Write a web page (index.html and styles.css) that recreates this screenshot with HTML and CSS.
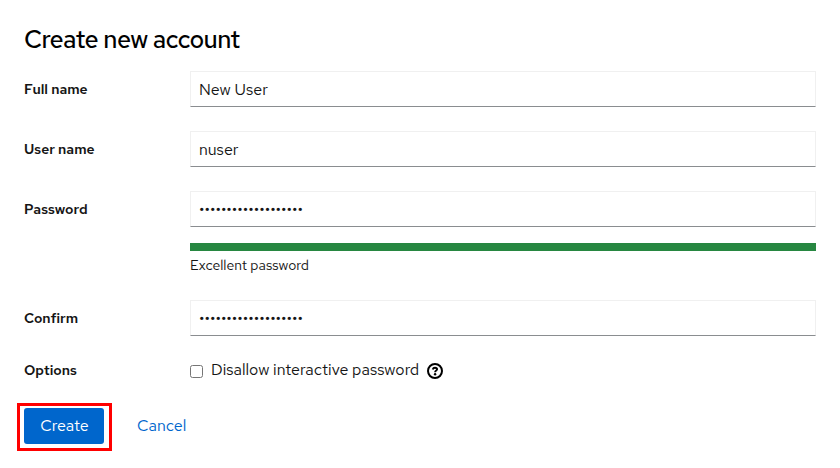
FILE: index.html
```
<!DOCTYPE html>
<html lang="en">
<head>
<meta charset="utf-8">
<title>Create new account</title>
<link rel="stylesheet" href="styles.css">
</head>
<body>
<main class="dialog">
  <h1 class="title">Create new account</h1>
  <form class="form">
    <label class="label" for="full-name">Full name</label>
    <input class="input" id="full-name" type="text" value="New User">
    <label class="label" for="user-name">User name</label>
    <input class="input" id="user-name" type="text" value="nuser">
    <label class="label" for="password">Password</label>
    <div class="field">
      <input class="input" id="password" type="password" value="correcthorsebattery">
      <div class="meter"></div>
      <div class="helper">Excellent password</div>
    </div>
    <label class="label" for="confirm">Confirm</label>
    <input class="input" id="confirm" type="password" value="correcthorsebattery">
    <span class="label label-options">Options</span>
    <div class="options">
      <input class="check" id="disallow" type="checkbox">
      <label class="check-label" for="disallow">Disallow interactive password</label>
      <svg class="help" viewBox="0 0 16 16" width="16" height="16" fill="none" stroke="#000">
        <circle cx="8" cy="8" r="7" stroke-width="2"/>
        <path d="M5.7 6.5C6.100 5.100 7 4.700 8 4.700c1.200 0 2.100.6 2.100 1.600C10.100 7.600 8.100 7.500 8.100 9.200" stroke-width="1.900"/>
        <circle cx="8.100" cy="11.200" r="1.200" fill="#000" stroke="none"/>
      </svg>
    </div>
  </form>
  <div class="actions">
    <div class="highlight"><button class="button primary" type="button">Create</button></div>
    <button class="button link" type="button">Cancel</button>
  </div>
</main>
</body>
</html>
```
FILE: styles.css
```
* {
  box-sizing: border-box;
}

body {
  margin: 0;
  background: #fff;
  color: #151515;
  font-family: "Red Hat Text", Lato, "Open Sans", sans-serif;
  font-size: 16px;
  line-height: 24px;
}

.dialog {
  padding: 24px 24px 0;
}

.title {
  margin: 0 0 15px;
  color: #000;
  font-size: 25px;
  font-weight: 500;
  letter-spacing: -0.6px;
  line-height: 32px;
}

.form {
  display: grid;
  grid-template-columns: 166px 1fr;
  row-gap: 24px;
}

.label {
  padding-top: 8px;
  font-size: 14px;
  font-weight: 600;
  line-height: 21px;
}

.input {
  display: block;
  width: 100%;
  height: 36px;
  padding: 0 8px;
  border: 1px solid #f0f0f0;
  border-bottom-color: #8a8d90;
  border-radius: 0;
  outline: 0;
  background: #fff;
  color: #151515;
  font: inherit;
}

.meter {
  height: 8px;
  margin-top: 16px;
  background: #278741;
}

.helper {
  height: 25px;
  padding-top: 4px;
  font-size: 14px;
  line-height: 21px;
}

.label-options {
  padding-top: 0;
}

.options {
  display: flex;
  height: 24px;
  margin-top: -2px;
}

.check {
  width: 13px;
  height: 13px;
  margin: 7px 8px 0 0;
}

.help {
  margin: 5px 0 0 8px;
}

.actions {
  display: flex;
  align-items: flex-start;
  margin: 21px 0 0 -7px;
}

.highlight {
  width: 95px;
  height: 48px;
  padding: 2px 4px;
  border: 3px solid #f00;
}

.button {
  height: 36px;
  padding: 0;
  border: 0;
  border-radius: 3px;
  font: inherit;
}

.primary {
  display: block;
  width: 80px;
  padding-left: 1px;
  background: #06c;
  color: #fff;
}

.link {
  margin: 5px 0 0 25px;
  background: none;
  color: #06c;
}
```
